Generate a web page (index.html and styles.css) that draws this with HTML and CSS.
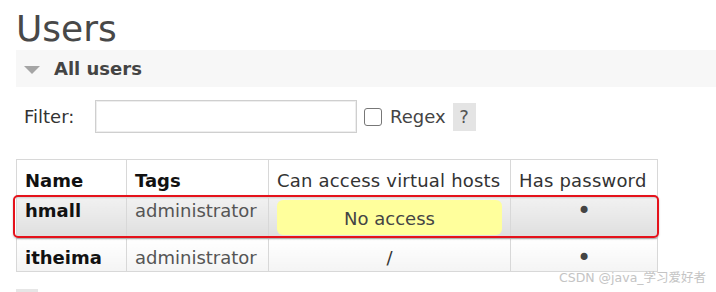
FILE: index.html
```html
<!DOCTYPE html>
<html lang="en">
<head>
  <meta charset="UTF-8" />
  <title>Users</title>
  <link rel="stylesheet" href="styles.css">
</head>
<body>
  <div class="page">
    <h1>Users</h1>

    <div class="section-head">
      <span class="arrow"></span>
      <span class="section-title">All users</span>
    </div>

    <div class="filter-row">
      <label class="filter-label">Filter:</label>
      <input type="text" class="filter-input">
      <span class="checkbox"></span>
      <span class="regex">Regex</span>
      <span class="help">?</span>
    </div>

    <div class="table-wrap">
      <table class="users">
        <thead>
          <tr>
            <th class="col-name bold">Name</th>
            <th class="col-tags bold">Tags</th>
            <th class="col-vhosts">Can access virtual hosts</th>
            <th class="col-pass">Has password</th>
          </tr>
        </thead>
        <tbody>
          <tr class="row-one">
            <td class="bold">hmall</td>
            <td class="tag">administrator</td>
            <td class="vhost-cell"><div class="warning">No access</div></td>
            <td class="center dot">&bull;</td>
          </tr>
          <tr class="row-two">
            <td class="bold">itheima</td>
            <td class="tag">administrator</td>
            <td class="center">/</td>
            <td class="center dot">&bull;</td>
          </tr>
        </tbody>
      </table>
      <!-- 标注框 -->
      <div class="highlight"></div>
    </div>

    <div class="more-btn"></div>
  </div>

  <div class="watermark">CSDN @java_学习爱好者</div>
</body>
</html>
```

FILE: styles.css
```css
html, body {
  margin: 0;
  padding: 0;
  width: 716px;
  height: 292px;
  overflow: hidden;
  position: relative;
  background: #fff;
  font-family: "DejaVu Sans", Verdana, sans-serif;
  font-size: 18px;
  color: #333;
}

.page {
  padding-left: 16px;
}

h1 {
  margin: 0;
  padding-top: 8px;
  height: 42px;
  line-height: 42px;
  font-size: 36px;
  font-weight: normal;
  color: #484848;
}

.section-head {
  display: flex;
  align-items: center;
  height: 37px;
  padding-left: 8px;
  background-color: #f7f7f7;
}

.arrow {
  width: 0;
  height: 0;
  border-left: 8px solid transparent;
  border-right: 8px solid transparent;
  border-top: 8px solid #a5a5a5;
  margin-right: 14px;
  margin-top: 2px;
}

.section-title {
  font-weight: bold;
  color: #444;
}

.filter-row {
  display: flex;
  align-items: center;
  margin-top: 13px;
  height: 33px;
  padding-left: 8px;
}

.filter-label {
  width: 71px;
  color: #333;
}

.filter-input {
  box-sizing: border-box;
  width: 262px;
  height: 33px;
  margin: 0;
  border: 1px solid #cfcfcf;
  box-shadow: inset 0 0 0 1px #eee;
}

.checkbox {
  box-sizing: border-box;
  width: 18px;
  height: 18px;
  margin-left: 7px;
  border: 1.5px solid #777;
  border-radius: 3px;
}

.regex {
  margin-left: 8px;
  color: #444;
}

.help {
  display: flex;
  align-items: center;
  justify-content: center;
  width: 23px;
  height: 28px;
  margin-left: 7px;
  background-color: #e4e4e4;
  color: #555;
}

.table-wrap {
  position: relative;
  margin-top: 26px;
  width: 642px;
}

.users {
  border-collapse: collapse;
  table-layout: fixed;
  width: 642px;
}

.users th,
.users td {
  border: 1px solid #d8d8d8;
  padding: 0 8px;
  line-height: 22px;
  text-align: left;
  white-space: nowrap;
  color: #333;
}

.users th {
  height: 33px;
  padding-top: 4px;
  font-weight: normal;
  vertical-align: middle;
  background: #fff;
  letter-spacing: 0.2px;
}

.col-name { width: 93px; }
.col-tags { width: 125px; }
.col-vhosts { width: 225px; }
.col-pass { width: 130px; }

.users .bold {
  font-weight: bold;
  color: #111;
  letter-spacing: 0;
}

.users .tag {
  color: #555;
}

.users .center {
  text-align: center;
}

.users .dot {
  font-size: 24px;
  color: #444;
}

.row-one td {
  height: 38px;
  padding-top: 2px;
  padding-bottom: 0;
  vertical-align: top;
  background: linear-gradient(to bottom, #f1f1f1, #dedede);
}

.warning {
  display: flex;
  align-items: center;
  justify-content: center;
  height: 35px;
  padding-top: 2px;
  box-sizing: border-box;
  border-radius: 6px;
  background-color: #ffff9c;
  color: #444;
}

.row-two td {
  height: 24px;
  padding-top: 8px;
  padding-bottom: 0;
  vertical-align: top;
  background: linear-gradient(to bottom, #fff, #f4f4f4);
}

.highlight {
  position: absolute;
  left: -3px;
  top: 36px;
  width: 646px;
  height: 43px;
  box-sizing: border-box;
  border: 2.5px solid #e5121b;
  border-radius: 5px;
  box-shadow: 0 1px 2px rgba(0, 0, 0, 0.25);
  pointer-events: none;
}

.more-btn {
  width: 22px;
  height: 10px;
  margin-top: 17px;
  background-color: #e6e6e6;
}

.watermark {
  position: absolute;
  left: 559px;
  top: 267px;
  font-family: "DejaVu Sans", "Noto Sans CJK SC", sans-serif;
  font-size: 12.5px;
  color: #c4c4c4;
  white-space: nowrap;
}
```
